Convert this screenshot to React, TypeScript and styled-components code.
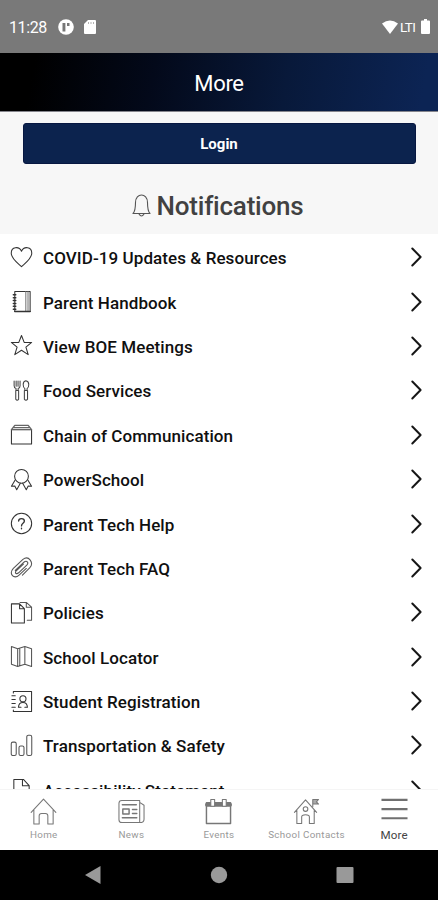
import React from "react";
import styled, { createGlobalStyle } from "styled-components";

const GlobalStyle = createGlobalStyle`
  * { box-sizing: border-box; }
  body { margin: 0; background: #fff; font-family: Roboto, "Liberation Sans", sans-serif; }
`;

const Screen = styled.div`
  width: 438px;
  height: 900px;
  display: flex;
  flex-direction: column;
  overflow: hidden;
  background: #fff;
`;

const StatusBar = styled.div`
  height: 53px;
  flex: none;
  display: flex;
  align-items: center;
  padding: 0 8px 0 9px;
  background: #797979;
  color: #fff;
`;

const Clock = styled.span`
  width: 49px;
  font-size: 16px;
  line-height: 20px;
  letter-spacing: -0.4px;
  padding-top: 2px;
`;

const StatusIcons = styled.div`
  display: flex;
  align-items: center;
  gap: 9px;
  flex: 1;
`;

const Signal = styled.div`
  display: flex;
  align-items: center;
`;

const Network = styled.span`
  width: 17px;
  margin: 1px 4px 0 2px;
  font-size: 13.5px;
  letter-spacing: -0.6px;
  white-space: nowrap;
`;

const Header = styled.header`
  height: 59px;
  flex: none;
  display: flex;
  align-items: center;
  justify-content: center;
  padding-top: 2px;
  background: linear-gradient(100deg, #000 8%, #03091a 35%, #08193a 65%, #0c2454 96%);
  border-bottom: 1px solid #85858c;
  color: #fff;
  font-size: 22px;
  letter-spacing: -0.3px;
`;

const Account = styled.section`
  height: 122px;
  flex: none;
  display: flex;
  flex-direction: column;
  align-items: center;
  padding-top: 11px;
  background: #f7f7f7;
`;

const LoginButton = styled.button`
  width: 393px;
  height: 41px;
  flex: none;
  padding: 1px 0 0;
  border: 1px solid #071741;
  border-radius: 3px;
  background: #0c234e;
  color: #fff;
  font: 700 15px Roboto, sans-serif;
`;

const NotificationTitle = styled.h2`
  display: flex;
  align-items: center;
  gap: 6px;
  margin: 27px 0 0;
  padding-right: 3px;
  color: #414141;
  font-size: 26px;
  line-height: 30px;
  font-weight: 500;
  letter-spacing: -0.22px;
`;

const Menu = styled.ul`
  flex: 1;
  min-height: 0;
  margin: 0;
  padding: 1px 0 0;
  overflow: hidden;
  list-style: none;
`;

const MenuRow = styled.li`
  height: 44.4px;
  display: flex;
  align-items: center;
  padding: 0 15px 0 10px;
`;

const MenuLabel = styled.span`
  flex: 1;
  margin-left: 10px;
  padding-top: 2px;
  color: #101010;
  font-size: 17px;
  line-height: 22px;
  font-weight: 500;
  letter-spacing: 0.08px;
  white-space: nowrap;
`;

const LineIcon = styled.svg<{ $tone?: string; $weight?: number }>`
  display: block;
  flex: none;
  fill: none;
  stroke: ${(p) => p.$tone ?? "#333"};
  stroke-width: ${(p) => p.$weight ?? 1.1};
  stroke-linejoin: round;
  stroke-linecap: round;
`;

const SolidIcon = styled.svg`
  display: block;
  flex: none;
  fill: #fff;
`;

const Tabs = styled.nav`
  height: 61px;
  flex: none;
  display: grid;
  grid-template-columns: repeat(5, 1fr);
  border-top: 1px solid #f5f5f5;
`;

const Tab = styled.div<{ $active?: boolean }>`
  display: flex;
  flex-direction: column;
  align-items: center;
  gap: 3px;
  padding-top: 8px;
  color: ${(p) => (p.$active ? "#444" : "#999")};
  font-size: ${(p) => (p.$active ? 11.6 : 9.8)}px;
  line-height: 14px;
  letter-spacing: ${(p) => (p.$active ? 0.2 : 0.35)}px;
  white-space: nowrap;
`;

const SystemNav = styled.div`
  height: 50px;
  flex: none;
  display: flex;
  align-items: center;
  justify-content: center;
  background: #000;
`;

const SystemIcon = styled.svg`
  display: block;
  width: 18px;
  height: 18px;
  margin: 0 54.2px;
  fill: #999;
`;

const items: { label: string; icon: React.ReactNode }[] = [
  {
    label: "COVID-19 Updates & Resources",
    icon: <path d="M12 21.5C9 18.5 1.3 13.5 1.3 7.5C1.3 .5 9.5 0 12 5.4C14.5 0 22.7 .5 22.7 7.5C22.7 13.5 15 18.5 12 21.5Z" />,
  },
  {
    label: "Parent Handbook",
    icon: (
      <>
        <path d="M5 1.5H21V22.5H5Z" />
        <path d="M16.5 1.5V22.5M18.8 1.5V22.5" stroke="#777" />
        <path d="M3.5 5H6M3.5 8H6M3.5 11H6M3.5 14H6M3.5 17H6M3.5 20H6M5 22.5H21" strokeWidth="1.6" />
      </>
    ),
  },
  {
    label: "View BOE Meetings",
    icon: <path d="M12 1.5L14.8 8.8H22.6L16.6 13.7L19 21.5L12 17L5 21.5L7.4 13.7L1.4 8.8H9.2Z" />,
  },
  {
    label: "Food Services",
    icon: (
      <g stroke="#444">
        <path d="M4.3 2V7Q4.3 9.5 6.3 10V12M10.5 2V7Q10.5 9.5 8.5 10V12M6.4 2V7.5M8.4 2V7.5M6 12H9V21Q7.5 23.5 6 21Z" />
        <path d="M16.5 1.8C12.8 2.5 13.2 8.5 15.5 10V12M16.5 1.8C20.8 2.5 20 8.5 17.8 10V12M15 12H18.3V21Q16.7 23.5 15 21Z" />
      </g>
    ),
  },
  {
    label: "Chain of Communication",
    icon: (
      <>
        <path d="M1.5 7H22.5V22H1.5Z" />
        <path d="M1.5 7L5 2.5H19L22.5 7M3.5 4.8H20.5" stroke="#666" strokeWidth="1.4" />
      </>
    ),
  },
  {
    label: "PowerSchool",
    icon: (
      <>
        <circle cx="12" cy="8.7" r="7.2" />
        <path d="M5.4 12.5L1.5 19L5 18.8L7 22.7L10.8 16M18.6 12.5L22.5 19L19 18.8L17 22.7L13.2 16" />
      </>
    ),
  },
  {
    label: "Parent Tech Help",
    icon: (
      <>
        <circle cx="12" cy="12" r="10.6" />
        <path d="M9 9.5C9 6 15 6 15 9.5C15 12 12 11.7 12 14.5M12 17V17.5" strokeWidth="1.4" />
      </>
    ),
  },
  {
    label: "Parent Tech FAQ",
    icon: (
      <path
        d="M5.5 15L14.5 6.5C17.5 4 20 7 17.5 9.5L9 17.5C6.5 19.5 4.5 17.5 6.5 15.5L14 8.5M13 20L20.5 12.5C25.5 7 19.5-1 13.5 3.5L3.5 13C-1.5 18.5 4 25 9.5 20L17 13"
        stroke="#555"
      />
    ),
  },
  {
    label: "Policies",
    icon: (
      <>
        <path d="M1.5 3H10L15 8V23H1.5ZM10 3V8H15" />
        <path d="M10.5 1.5H17L22.5 6.5V20H18M17 1.5V6.5H22.5" stroke="#555" />
      </>
    ),
  },
  {
    label: "School Locator",
    icon: <path d="M1.5 1.5L8 4L15.5 1.5L22.5 4V22.5L15.5 20L8 22.5L1.5 20ZM8 4V22.5M15.5 1.5V20M10.2 4V21.5" stroke="#555" />,
  },
  {
    label: "Student Registration",
    icon: (
      <>
        <path d="M3.5 3V1.5H22.5V22.5H3.5V21M2 6H5.5M2 10H5.5M2 14H5.5M2 18H5.5" />
        <circle cx="13.5" cy="9.2" r="3.2" />
        <path d="M8.8 18C9 14.5 11 13 13.5 13S18 14.5 18.2 18H15.5M8.8 18H11.5" />
      </>
    ),
  },
  {
    label: "Transportation & Safety",
    icon: (
      <g stroke="#555">
        <rect x="1.3" y="8.5" width="5.2" height="14" rx="1.7" />
        <rect x="9.4" y="12.5" width="5.2" height="10" rx="1.7" />
        <rect x="17.5" y="1.3" width="5.2" height="21.2" rx="1.7" />
      </g>
    ),
  },
  {
    label: "Accessibility Statement",
    icon: <path d="M4 1.5H14L20 8V23H4ZM13 1.5V8H20" />,
  },
];

const tabs: { label: string; active?: boolean; icon: React.ReactNode }[] = [
  { label: "Home", icon: <path d="M1.2 15L14 1.2L26.8 15M4 12.5V27H9.5V18.5Q9.5 16 12 16H16Q18.5 16 18.5 18.5V27H24V12.5" /> },
  {
    label: "News",
    icon: (
      <>
        <path d="M4 2.5H22.5V25.5H4Q1 25.5 1 22.5V5.5Q1 2.5 4 2.5ZM22.5 4.5L27 7.5V22Q27 25.5 22.5 25.5" />
        <path d="M4.5 7H19M15 12H19.5M15 16H19.5M4.5 20.5H19.5M5 11.5H11.5V16.5H5Z" strokeWidth="1.5" />
      </>
    ),
  },
  {
    label: "Events",
    icon: (
      <>
        <path d="M1.5 5H26.5V26.5H1.5Z" strokeWidth="1.5" />
        <path d="M2 7H26" strokeWidth="4" />
        <path d="M6 1.5H10V8.5H6ZM18 1.5H22V8.5H18Z" fill="#fff" />
      </>
    ),
  },
  {
    label: "School Contacts",
    icon: (
      <>
        <path d="M1.5 15L13 2L24.5 15M4 13V26.5H9V19.5Q9 17.3 13 17.3T17 19.5V26.5H22V13" />
        <circle cx="13" cy="11.5" r="2.4" />
        <path d="M20.5 9V1.5L26.5 1.5L24.3 4L26.5 6.3H20.5Z" fill="#aaa" />
      </>
    ),
  },
  { label: "More", active: true, icon: <path d="M.5 2H27.5M.5 11.5H27.5M.5 21H27.5" strokeLinecap="butt" /> },
];

export default function App() {
  return (
    <Screen>
      <GlobalStyle />
      <StatusBar>
        <Clock>11:28</Clock>
        <StatusIcons>
          <SolidIcon width="16" height="16" viewBox="0 0 16 16">
            <circle cx="8" cy="8" r="7.8" />
            <path d="M4.5 4H7.4V12.5H4.5ZM9 4H11.5V7H9Z" fill="#777" />
          </SolidIcon>
          <SolidIcon width="14" height="16" viewBox="0 0 14 16">
            <path d="M5 1H12Q13 1 13 2V14Q13 15 12 15H2Q1 15 1 14V5Z" />
            <path d="M5.5 3V5M8 3V5M10.5 3V5" stroke="#aaa" strokeWidth="0.9" />
          </SolidIcon>
        </StatusIcons>
        <Signal>
          <SolidIcon width="16" height="14" viewBox="0 0 16 14">
            <path d="M0 3.5Q8-2.5 16 3.5L8 14Z" />
          </SolidIcon>
          <Network>LTI</Network>
          <SolidIcon width="9" height="15" viewBox="0 0 9 15">
            <path d="M3 0H6V1.5H8Q9 1.5 9 2.5V14Q9 15 8 15H1Q0 15 0 14V2.5Q0 1.5 1 1.5H3Z" />
          </SolidIcon>
        </Signal>
      </StatusBar>
      <Header>More</Header>
      <Account>
        <LoginButton>Login</LoginButton>
        <NotificationTitle>
          <LineIcon width="19" height="24" viewBox="0 0 19 24" $tone="#555">
            <path d="M1 19.5Q3.5 17 3.5 8.5C3.5-1.5 15.5-1.5 15.5 8.5Q15.5 17 18 19.5ZM7 20Q9.5 24 12 20" />
          </LineIcon>
          Notifications
        </NotificationTitle>
      </Account>
      <Menu>
        {items.map((item) => (
          <MenuRow key={item.label}>
            <LineIcon width="23" height="23" viewBox="0 0 24 24">{item.icon}</LineIcon>
            <MenuLabel>{item.label}</MenuLabel>
            <LineIcon width="13" height="20" viewBox="0 0 13 20" $tone="#161616" $weight={2}>
              <path d="M2.3 1.5L10.6 10L2.3 18.5" />
            </LineIcon>
          </MenuRow>
        ))}
      </Menu>
      <Tabs>
        {tabs.map((tab) => (
          <Tab key={tab.label} $active={tab.active}>
            <LineIcon width="27" height="27" viewBox="0 0 28 28" $tone={tab.active ? "#707070" : "#777"} $weight={tab.active ? 2.3 : 1.1}>
              {tab.icon}
            </LineIcon>
            {tab.label}
          </Tab>
        ))}
      </Tabs>
      <SystemNav>
        <SystemIcon viewBox="0 0 18 18"><path d="M1 9L16.5 0V18Z" /></SystemIcon>
        <SystemIcon viewBox="0 0 18 18"><circle cx="9" cy="9" r="8.2" /></SystemIcon>
        <SystemIcon viewBox="0 0 18 18"><rect x="0.5" y="1" width="17" height="16" rx="1" /></SystemIcon>
      </SystemNav>
    </Screen>
  );
}
